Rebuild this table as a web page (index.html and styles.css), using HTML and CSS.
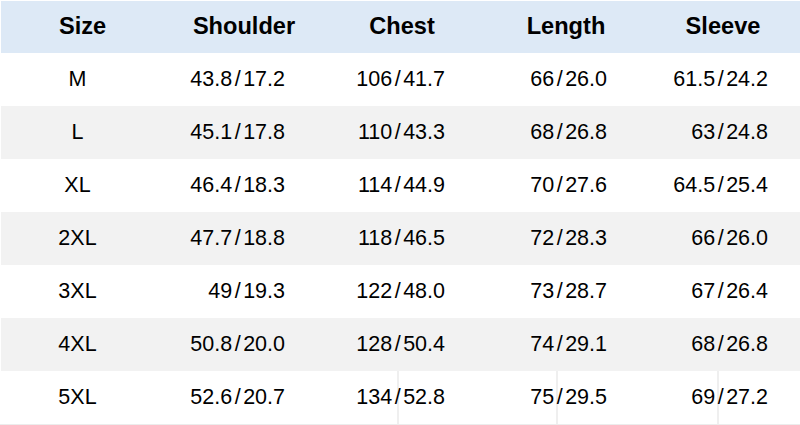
FILE: index.html
```html
<!DOCTYPE html>
<html>
<head>
<meta charset="utf-8">
<link rel="stylesheet" href="styles.css">
</head>
<body>
<div class="chart">
  <div class="row head">
    <div class="cell">Size</div>
    <div class="cell">Shoulder</div>
    <div class="cell">Chest</div>
    <div class="cell">Length</div>
    <div class="cell">Sleeve</div>
  </div>
  <div class="row">
    <div class="cell size">M</div>
    <div class="cell num">43.8<span class="sep">/</span>17.2</div>
    <div class="cell num">106<span class="sep">/</span>41.7</div>
    <div class="cell num">66<span class="sep">/</span>26.0</div>
    <div class="cell num">61.5<span class="sep">/</span>24.2</div>
  </div>
  <div class="row alt">
    <div class="cell size">L</div>
    <div class="cell num">45.1<span class="sep">/</span>17.8</div>
    <div class="cell num">110<span class="sep">/</span>43.3</div>
    <div class="cell num">68<span class="sep">/</span>26.8</div>
    <div class="cell num">63<span class="sep">/</span>24.8</div>
  </div>
  <div class="row">
    <div class="cell size">XL</div>
    <div class="cell num">46.4<span class="sep">/</span>18.3</div>
    <div class="cell num">114<span class="sep">/</span>44.9</div>
    <div class="cell num">70<span class="sep">/</span>27.6</div>
    <div class="cell num">64.5<span class="sep">/</span>25.4</div>
  </div>
  <div class="row alt">
    <div class="cell size">2XL</div>
    <div class="cell num">47.7<span class="sep">/</span>18.8</div>
    <div class="cell num">118<span class="sep">/</span>46.5</div>
    <div class="cell num">72<span class="sep">/</span>28.3</div>
    <div class="cell num">66<span class="sep">/</span>26.0</div>
  </div>
  <div class="row">
    <div class="cell size">3XL</div>
    <div class="cell num">49<span class="sep">/</span>19.3</div>
    <div class="cell num">122<span class="sep">/</span>48.0</div>
    <div class="cell num">73<span class="sep">/</span>28.7</div>
    <div class="cell num">67<span class="sep">/</span>26.4</div>
  </div>
  <div class="row alt">
    <div class="cell size">4XL</div>
    <div class="cell num">50.8<span class="sep">/</span>20.0</div>
    <div class="cell num">128<span class="sep">/</span>50.4</div>
    <div class="cell num">74<span class="sep">/</span>29.1</div>
    <div class="cell num">68<span class="sep">/</span>26.8</div>
  </div>
  <div class="row last">
    <div class="cell size">5XL</div>
    <div class="cell num">52.6<span class="sep">/</span>20.7</div>
    <div class="cell num">134<span class="sep">/</span>52.8</div>
    <div class="cell num">75<span class="sep">/</span>29.5</div>
    <div class="cell num">69<span class="sep">/</span>27.2</div>
  </div>
</div>
</body>
</html>
```

FILE: styles.css
```css
html, body {
  margin: 0;
  padding: 0;
  background: #ffffff;
}

body {
  width: 800px;
  height: 425px;
  overflow: hidden;
  font-family: "Liberation Sans", Arial, sans-serif;
  color: #000000;
}

.chart {
  padding: 1px 0 0 1px;
  border-bottom: 1px solid #ececec;
}

.row {
  display: grid;
  grid-template-columns: 159px 160px 160px 160px 160px;
  height: 53px;
  align-items: center;
}

.row.head {
  height: 52px;
  background: #dde9f6;
  font-weight: bold;
}

.row.alt {
  background: #f2f2f2;
}

.row.last {
  background:
    linear-gradient(90deg,
      transparent 396px, #efefef 396px, #efefef 398px, transparent 398px,
      transparent 555px, #efefef 555px, #efefef 557px, transparent 557px,
      transparent 716px, #efefef 716px, #efefef 718px, transparent 718px);
}

.cell {
  font-size: 21.5px;
  line-height: 1;
  white-space: nowrap;
}

.head .cell {
  font-size: 23.6px;
  text-align: center;
}

.head .cell:nth-child(1) {
  padding-left: 4px;
}

.head .cell:nth-child(2) {
  padding-left: 8px;
}

.head .cell:nth-child(3) {
  padding-left: 4px;
}

.head .cell:nth-child(4) {
  padding-left: 12px;
}

.head .cell:nth-child(5) {
  padding-left: 6px;
}

.cell.size {
  text-align: center;
  padding-right: 6px;
}

.cell.num {
  text-align: right;
  padding-right: 35px;
}

.cell.num:nth-child(4) {
  padding-right: 33px;
}

.cell.num:nth-child(5) {
  padding-right: 32px;
}

.sep {
  display: inline-block;
  margin: 0 2.5px;
}
```
